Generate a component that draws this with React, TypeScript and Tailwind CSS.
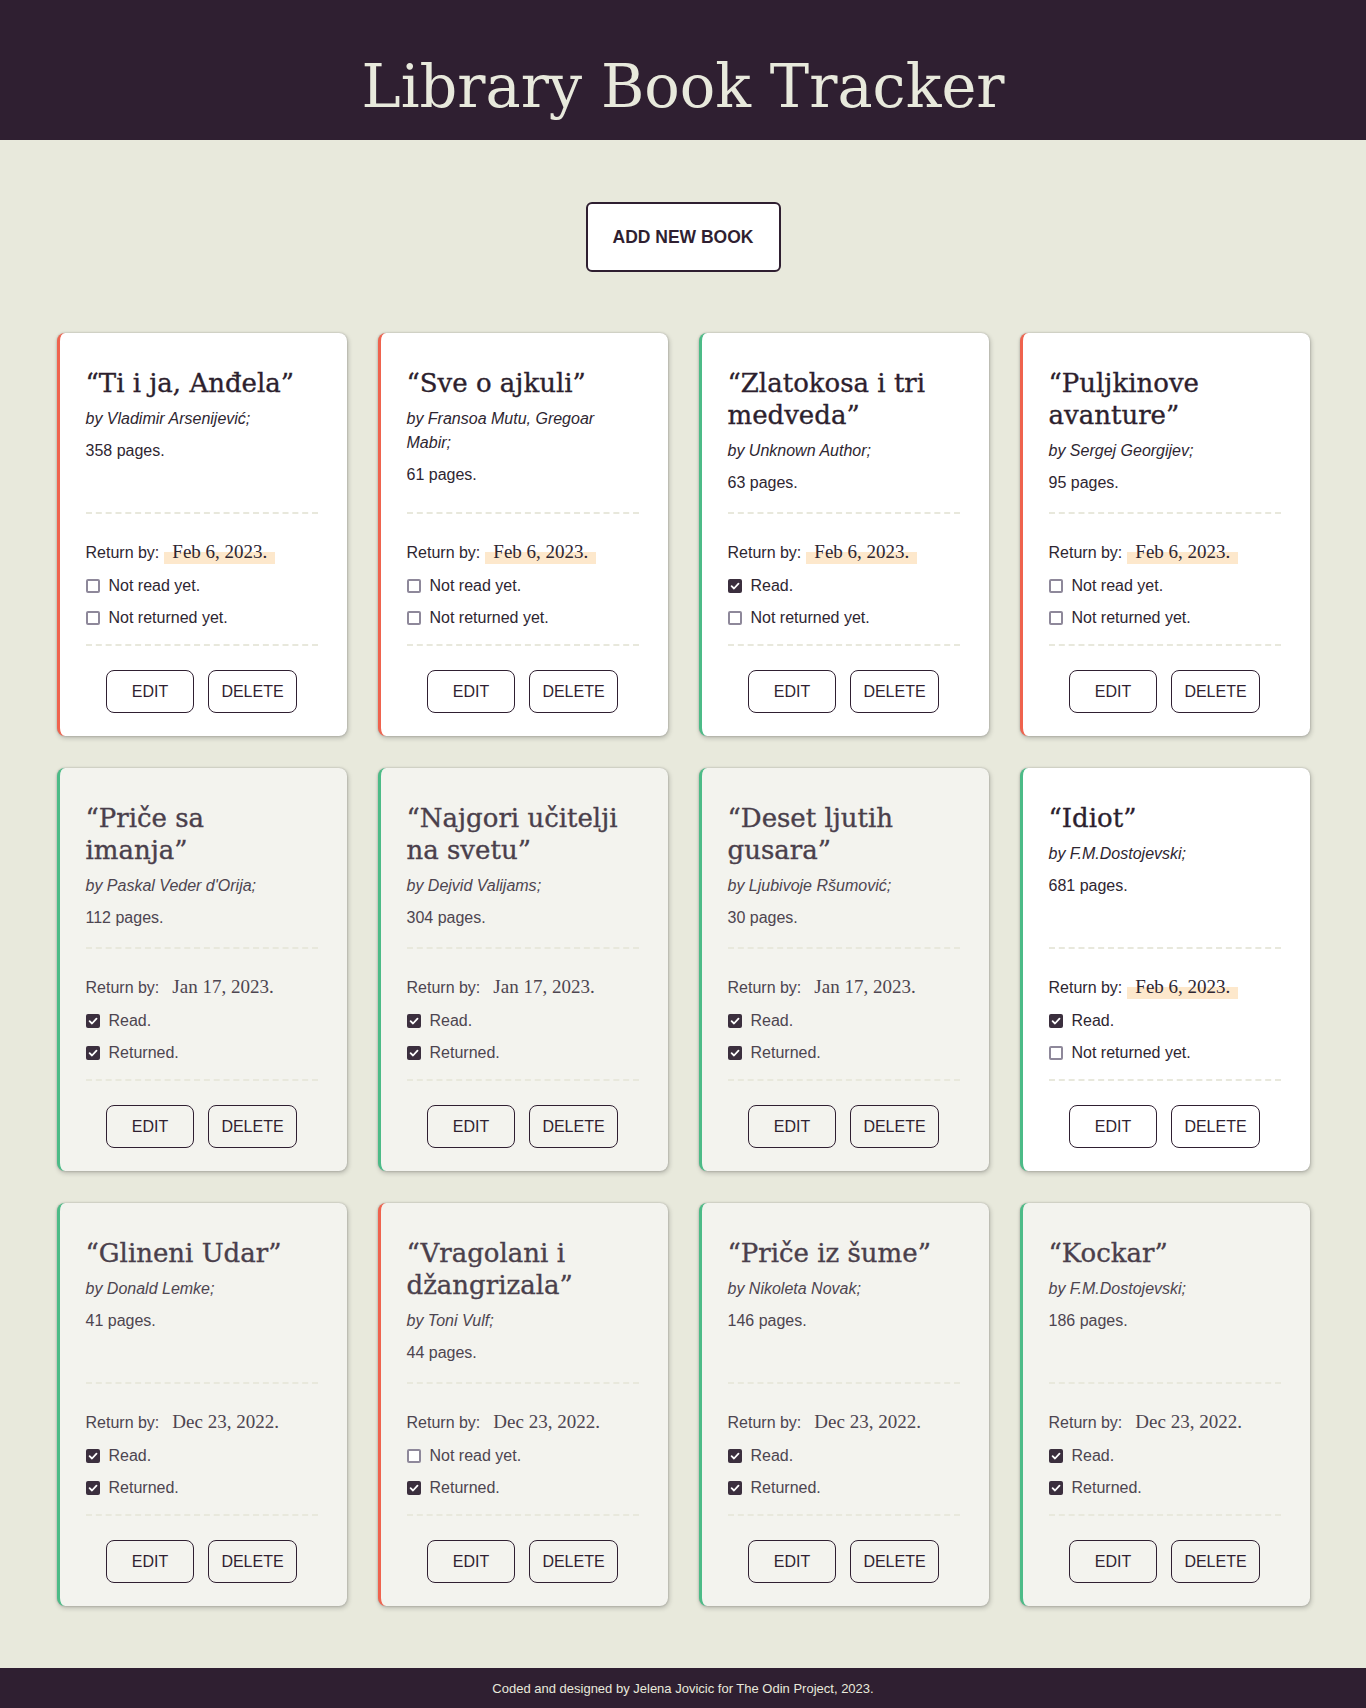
import { FC } from 'react';

interface Book {
  title: string;
  author: string;
  pages: number;
  returnBy: string;
  read: boolean;
  returned: boolean;
}

const books: Book[] = [
  { title: 'Ti i ja, Anđela', author: 'Vladimir Arsenijević', pages: 358, returnBy: 'Feb 6, 2023.', read: false, returned: false },
  { title: 'Sve o ajkuli', author: 'Fransoa Mutu, Gregoar Mabir', pages: 61, returnBy: 'Feb 6, 2023.', read: false, returned: false },
  { title: 'Zlatokosa i tri medveda', author: 'Unknown Author', pages: 63, returnBy: 'Feb 6, 2023.', read: true, returned: false },
  { title: 'Puljkinove avanture', author: 'Sergej Georgijev', pages: 95, returnBy: 'Feb 6, 2023.', read: false, returned: false },
  { title: 'Priče sa imanja', author: "Paskal Veder d'Orija", pages: 112, returnBy: 'Jan 17, 2023.', read: true, returned: true },
  { title: 'Najgori učitelji na svetu', author: 'Dejvid Valijams', pages: 304, returnBy: 'Jan 17, 2023.', read: true, returned: true },
  { title: 'Deset ljutih gusara', author: 'Ljubivoje Ršumović', pages: 30, returnBy: 'Jan 17, 2023.', read: true, returned: true },
  { title: 'Idiot', author: 'F.M.Dostojevski', pages: 681, returnBy: 'Feb 6, 2023.', read: true, returned: false },
  { title: 'Glineni Udar', author: 'Donald Lemke', pages: 41, returnBy: 'Dec 23, 2022.', read: true, returned: true },
  { title: 'Vragolani i džangrizala', author: 'Toni Vulf', pages: 44, returnBy: 'Dec 23, 2022.', read: false, returned: true },
  { title: 'Priče iz šume', author: 'Nikoleta Novak', pages: 146, returnBy: 'Dec 23, 2022.', read: true, returned: true },
  { title: 'Kockar', author: 'F.M.Dostojevski', pages: 186, returnBy: 'Dec 23, 2022.', read: true, returned: true },
];

const CheckBox: FC<{ checked: boolean }> = ({ checked }) =>
  checked ? (
    <span className="w-[14px] h-[14px] rounded-[2px] bg-[#3b2f3e] flex items-center justify-center shrink-0">
      <svg width="10" height="10" viewBox="0 0 10 10" fill="none">
        <path d="M1.6 5.2 L4 7.5 L8.5 2.6" stroke="#ffffff" strokeWidth="1.8" strokeLinecap="round" strokeLinejoin="round" />
      </svg>
    </span>
  ) : (
    <span className="w-[14px] h-[14px] rounded-[2px] border-2 border-[#8e889a] bg-white shrink-0" />
  );

const BookCard: FC<{ book: Book }> = ({ book }) => {
  const titleColor = book.returned ? 'text-[#4a3f4b]' : 'text-[#2d1f2e]';
  const textColor = book.returned ? 'text-[#4d4550]' : 'text-[#2e2631]';

  return (
    <div
      className={`rounded-lg border-l-[3px] ${book.read ? 'border-[#4cbb87]' : 'border-[#ef634e]'} ${
        book.returned ? 'bg-[#f3f3ee]' : 'bg-white'
      } shadow-[0_0_2px_rgba(0,0,0,0.25),1px_2px_5px_rgba(0,0,0,0.22)] pl-[26px] pr-[29px] pt-[34px] pb-[23px] flex flex-col`}
    >
      <div className={`min-h-[145px] flex flex-col gap-2 ${textColor}`}>
        <h2
          className={`max-w-[226px] font-['DejaVu_Serif',serif] text-[26px] leading-[32px] [-webkit-text-stroke:0.35px_currentColor] ${titleColor}`}
        >
          “{book.title}”
        </h2>
        <p className="italic text-base leading-6">by {book.author};</p>
        <p className="text-base leading-6">{book.pages} pages.</p>
      </div>
      <div className="border-t-2 border-dashed border-[#e8e8dc]" />
      <div className={`pt-[26px] pb-[14px] flex flex-col gap-2 text-base ${textColor}`}>
        <div className="h-6 leading-6 mb-[2px] whitespace-nowrap">
          Return by:
          <span
            className={`inline-block h-6 leading-6 ml-[5px] px-2 font-['Liberation_Serif',serif] text-[19px] ${
              book.returned ? '' : 'bg-[linear-gradient(to_bottom,transparent_50%,#fde8cc_50%)]'
            }`}
          >
            {book.returnBy}
          </span>
        </div>
        <div className="h-6 flex items-center gap-[9px]">
          <CheckBox checked={book.read} />
          <span>{book.read ? 'Read.' : 'Not read yet.'}</span>
        </div>
        <div className="h-6 flex items-center gap-[9px]">
          <CheckBox checked={book.returned} />
          <span>{book.returned ? 'Returned.' : 'Not returned yet.'}</span>
        </div>
      </div>
      <div className="border-t-2 border-dashed border-[#e8e8dc]" />
      <div className="pt-6 flex justify-center gap-[14px]">
        <button className="w-[88px] h-[43px] border border-[#2f1f31] rounded-lg text-base text-[#2f1f31] uppercase">
          Edit
        </button>
        <button className="w-[89px] h-[43px] border border-[#2f1f31] rounded-lg text-base text-[#2f1f31] uppercase">
          Delete
        </button>
      </div>
    </div>
  );
};

const App: FC = () => {
  return (
    <div className="min-h-screen flex flex-col bg-[#e8e9dc] font-['Liberation_Sans',Arial,sans-serif]">
      <header className="h-[140px] bg-[#2f1f31] pt-[57px]">
        <h1 className="text-center font-['DejaVu_Serif',serif] text-[59px] leading-[59px] text-[#e8e9dc]">
          Library Book Tracker
        </h1>
      </header>

      <main className="flex-1 flex flex-col items-center pt-[62px] pb-[62px]">
        <button className="w-[195px] h-[70px] border-2 border-[#2f1f31] rounded-md bg-white font-bold text-[17.5px] text-[#2f1f31]">
          ADD NEW BOOK
        </button>
        <div className="mt-[61px] grid grid-cols-[repeat(4,290px)] gap-x-[31px] gap-y-8">
          {books.map((book) => (
            <BookCard key={book.title} book={book} />
          ))}
        </div>
      </main>

      <footer className="h-[41px] bg-[#2f1f31] flex items-center justify-center text-[13px] text-[#e8e9dc]">
        Coded and designed by Jelena Jovicic for The Odin Project, 2023.
      </footer>
    </div>
  );
};

export default App;
